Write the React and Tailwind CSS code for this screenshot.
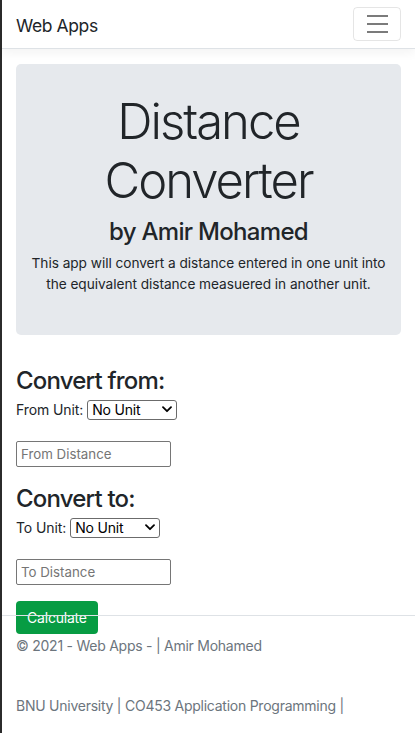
import React from "react";

function Chevron() {
  return (
    <svg width="10" height="7" viewBox="0 0 10 7" className="pointer-events-none absolute right-[5px] top-[6px]">
      <path d="M1 1.2 L5 5.2 L9 1.2" fill="none" stroke="#000" strokeWidth="1.8" strokeLinecap="round" strokeLinejoin="round" />
    </svg>
  );
}

function UnitSelect({ width }) {
  return (
    <span className={`relative inline-flex ${width}`}>
      <select className="h-[20px] w-full appearance-none rounded-[3px] border border-[#6b6b6b] bg-white pl-[4px] text-[14px] leading-[18px] tracking-[-0.2px] text-black">
        <option>No Unit</option>
        <option>Miles</option>
        <option>Feet</option>
        <option>Metres</option>
      </select>
      <Chevron />
    </span>
  );
}

export default function App() {
  return (
    <div
      className="relative min-h-[736px] border-l-2 border-[#2b2b2b] bg-white text-[14px] leading-[21px] text-[#212529]"
      style={{ fontFamily: "Inter, 'Noto Sans', sans-serif" }}
    >
      <header className="flex h-[49px] items-center justify-between border-b border-[#dee2e6] px-[14px] shadow-[0_3.5px_10px_rgba(0,0,0,0.05)]">
        <span className="pt-[3px] text-[17.5px] leading-[26px] tracking-[-0.4px]">Web Apps</span>
        <button className="flex h-[34px] w-[48px] flex-col items-center justify-center gap-[6px] rounded-[4px] border border-[rgba(0,0,0,0.1)]">
          <span className="block h-[2px] w-[21px] bg-[#7b7b7b]" />
          <span className="block h-[2px] w-[21px] bg-[#7b7b7b]" />
          <span className="block h-[2px] w-[21px] bg-[#7b7b7b]" />
        </button>
      </header>

      <main className="px-[14px] pt-[15px]">
        <section className="mb-[31px] rounded-[5px] bg-[#e6e9ed] px-[14px] pb-[26px] pt-[28px] text-center">
          <h1 className="mb-[7px] text-[49px] font-light leading-[59px] tracking-[-2px]">
            Distance
            <br />
            Converter
          </h1>
          <h3 className="mb-[7px] text-[24px] font-medium leading-[29px] tracking-[-0.7px]">by Amir Mohamed</h3>
          <p className="mb-[14px] text-[13.7px] leading-[21px] tracking-[-0.05px]">
            This app will convert a distance entered in one unit into the equivalent distance measuered in another unit.
          </p>
        </section>

        <section>
          <h3 className="mb-[4px] text-[24px] font-medium leading-[29px] tracking-[-0.8px]">Convert from:</h3>
          <div className="flex items-center gap-[4px] text-[14px] tracking-[-0.1px]">
            <label>From Unit:</label>
            <UnitSelect width="w-[90px]" />
          </div>
          <input
            placeholder="From Distance"
            className="mt-[21px] block h-[26px] w-[155px] rounded-[2px] border border-[#767676] px-[4px] text-[13.3px] placeholder:text-[#757575]"
          />
          <h3 className="mb-[4px] mt-[17px] text-[24px] font-medium leading-[29px] tracking-[-0.8px]">Convert to:</h3>
          <div className="flex items-center gap-[4px] text-[14px] tracking-[-0.1px]">
            <label>To Unit:</label>
            <UnitSelect width="w-[90px]" />
          </div>
          <input
            placeholder="To Distance"
            className="mt-[21px] block h-[26px] w-[155px] rounded-[2px] border border-[#767676] px-[4px] text-[13.3px] placeholder:text-[#757575]"
          />
          <button className="mt-[16px] h-[33px] rounded-[4px] bg-[#079c43] px-[11px] text-[14px] tracking-[-0.2px] text-white">
            Calculate
          </button>
        </section>
      </main>

      <footer className="absolute left-0 right-0 top-[615px] whitespace-nowrap border-t border-[#dee2e6] px-[14px] text-[14px] leading-[60px] tracking-[-0.25px] text-[#6c757d]">
        <div>© 2021 - Web Apps - | Amir Mohamed</div>
        <div>BNU University | CO453 Application Programming |</div>
      </footer>
    </div>
  );
}
